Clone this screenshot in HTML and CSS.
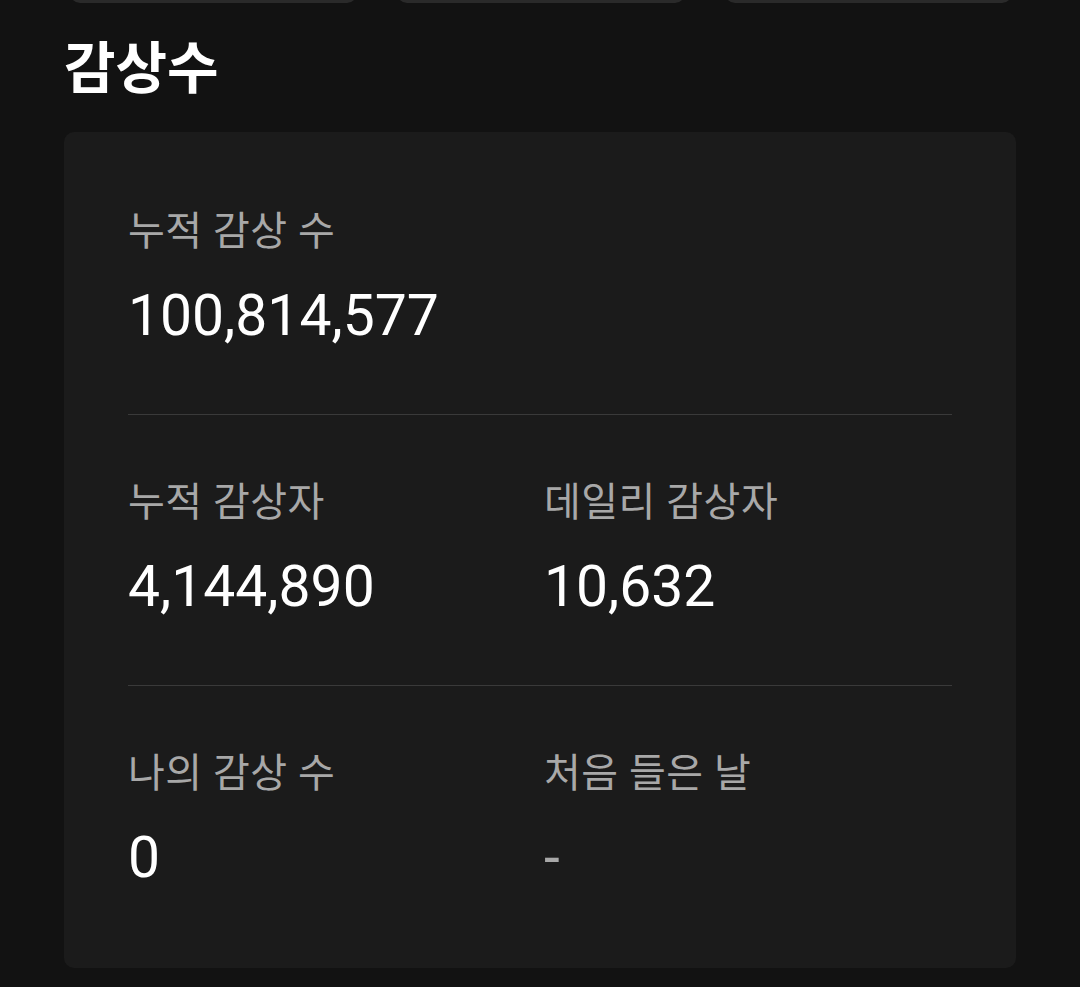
FILE: index.html
```html
<!DOCTYPE html>
<html lang="ko">
<head>
  <meta charset="UTF-8" />
  <meta name="viewport" content="width=device-width, initial-scale=1.0" />
  <title>감상수</title>
  <link rel="stylesheet" href="styles.css">
</head>
<body>
  <div class="page">
    <div class="chip-row">
      <div class="chip"></div>
      <div class="chip"></div>
      <div class="chip"></div>
    </div>

    <h2 class="section-title">감상수</h2>

    <div class="stats-card">
      <div class="stats-row">
        <div class="stat">
          <div class="stat-label">누적 감상 수</div>
          <div class="stat-value">100,814,577</div>
        </div>
      </div>
      <div class="stats-row">
        <div class="stat">
          <div class="stat-label">누적 감상자</div>
          <div class="stat-value">4,144,890</div>
        </div>
        <div class="stat">
          <div class="stat-label">데일리 감상자</div>
          <div class="stat-value">10,632</div>
        </div>
      </div>
      <div class="stats-row">
        <div class="stat">
          <div class="stat-label">나의 감상 수</div>
          <div class="stat-value">0</div>
        </div>
        <div class="stat">
          <div class="stat-label">처음 들은 날</div>
          <div class="stat-value empty">-</div>
        </div>
      </div>
    </div>
  </div>
</body>
</html>
```

FILE: styles.css
```css
html, body {
  margin: 0;
  padding: 0;
  background-color: #121212;
}
body {
  font-family: Roboto, "Noto Sans CJK KR", sans-serif;
  color: #fff;
}
.page {
  padding: 0 64px;
}
.chip-row {
  display: grid;
  grid-template-columns: repeat(3, 1fr);
  gap: 40px;
  height: 60px;
  margin: -57px 4px 0 6px;
}
.chip {
  background-color: #2a2a2a;
  border-radius: 10px;
}
.section-title {
  margin: 0;
  padding: 0;
  font-family: "Noto Sans CJK KR", sans-serif;
  font-weight: 700;
  font-size: 56px;
  line-height: 72px;
  margin-top: 25px;
  margin-bottom: 32px;
}
.stats-card {
  background-color: #1b1b1b;
  border-radius: 10px;
  padding: 12px 64px;
}
.stats-row {
  display: grid;
  grid-template-columns: 416px 1fr;
  padding: 63px 0;
}
.stats-row + .stats-row {
  border-top: 1px solid #3a3a3a;
}
.stat-label {
  font-size: 40px;
  line-height: 50px;
  letter-spacing: 0.5px;
  color: #a8a8a8;
}
.stat-value {
  margin-top: 24px;
  font-size: 57px;
  line-height: 70px;
  color: #fff;
}
.stat-value.empty {
  color: #a8a8a8;
}
```
